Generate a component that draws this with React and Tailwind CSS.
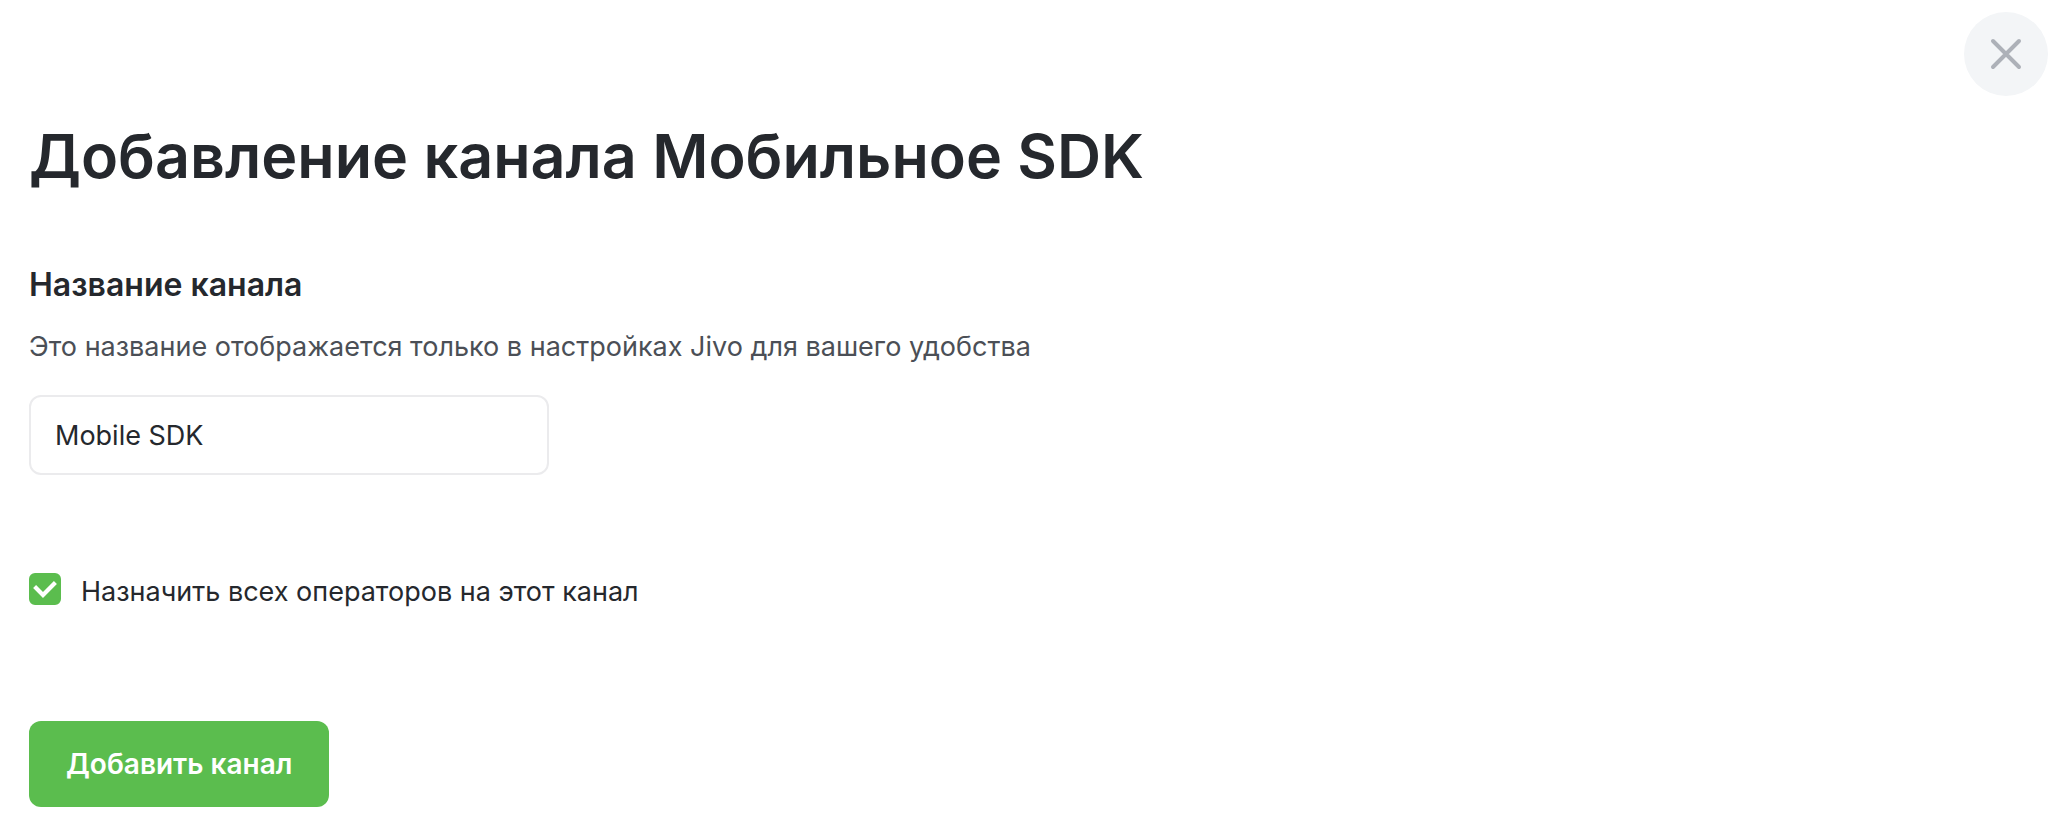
export default function App() {
  return (
    <main className="bg-white pt-3 pb-7 pl-[29px] pr-6 font-['Inter',sans-serif] text-[#25282d]">
      <header className="flex justify-end">
        <button type="button" aria-label="Закрыть" className="flex size-[84px] items-center justify-center rounded-full bg-[#f3f5f7] text-[#adb1b8]">
          <svg viewBox="0 0 32 32" className="size-8" fill="none" stroke="currentColor" strokeWidth="4" strokeLinecap="round">
            <path d="M3 3 29 29M29 3 3 29" />
          </svg>
        </button>
      </header>
      <h1 className="mt-5 text-[61px] leading-20 font-semibold">Добавление канала Мобильное SDK</h1>
      <form>
        <label htmlFor="name" className="mt-[69px] block text-[32px] leading-10 font-semibold">Название канала</label>
        <p id="hint" className="mt-[22px] text-[27px] leading-10 text-[#4b4f56]">Это название отображается только в настройках Jivo для вашего удобства</p>
        <input id="name" type="text" aria-describedby="hint" defaultValue="Mobile SDK" className="mt-7 block h-20 w-[520px] max-w-full rounded-xl border-2 border-[#ebebed] px-6 text-[27px]" />
        <div className="mt-[98px] flex items-start gap-5">
          <span className="relative flex size-8">
            <input id="assign" type="checkbox" defaultChecked className="peer size-8 appearance-none rounded-md border-2 border-[#5bbd4e] checked:bg-[#5bbd4e]" />
            <svg viewBox="0 0 32 32" className="pointer-events-none absolute inset-0 hidden size-8 peer-checked:block" fill="none" stroke="white" strokeWidth="4.2">
              <path d="m5.6 13.6 8.4 8.4 12.4-12.4" />
            </svg>
          </span>
          <label htmlFor="assign" className="text-[27px] leading-[38px]">Назначить всех операторов на этот канал</label>
        </div>
        <button type="submit" className="mt-[110px] h-[86px] rounded-xl bg-[#5bbd4e] px-[37px] text-[28px] font-semibold text-white">Добавить канал</button>
      </form>
    </main>
  );
}
